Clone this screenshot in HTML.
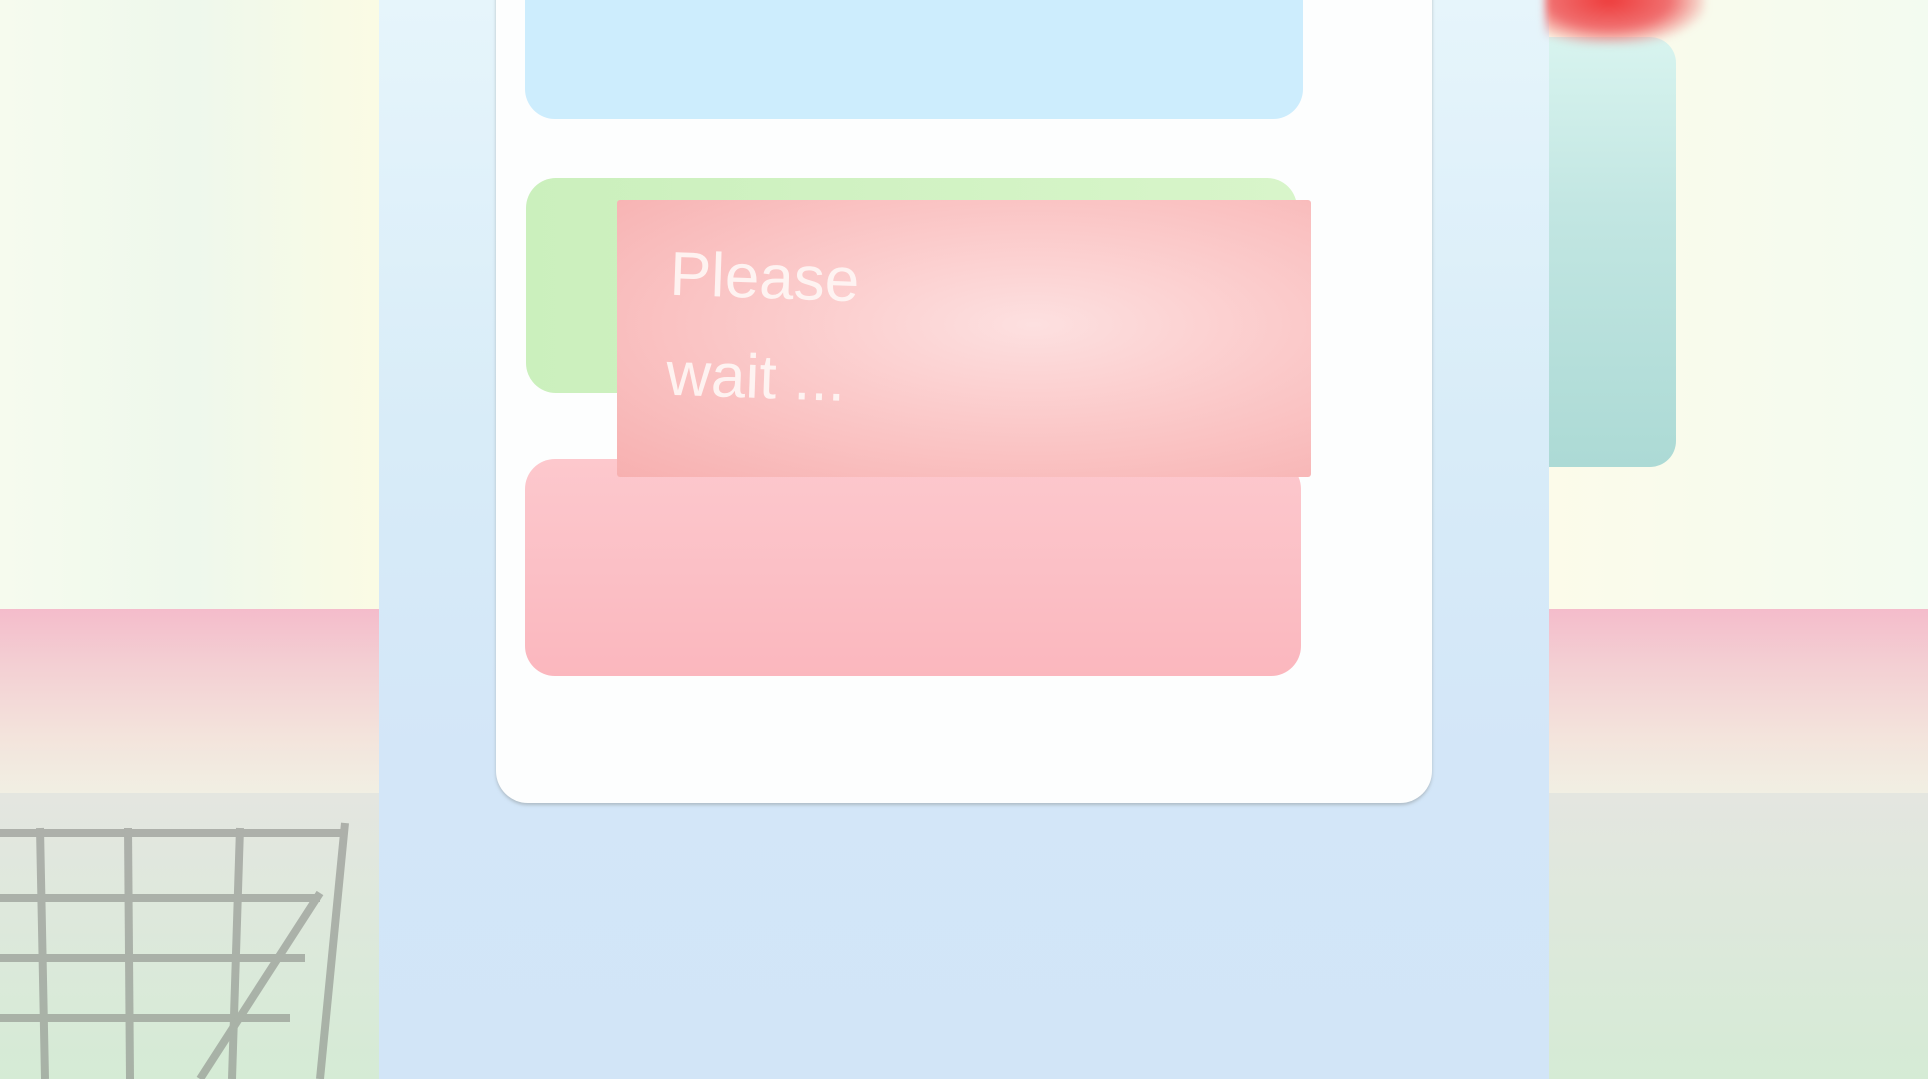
<!DOCTYPE html>
<html><head><meta charset="utf-8"><style>
html,body{margin:0;padding:0;width:1928px;height:1079px;overflow:hidden;position:relative;font-family:"Liberation Sans",sans-serif}
div{position:absolute;box-sizing:border-box}
</style></head><body>
<div style="left:0;top:0;width:1928px;height:609px;background:linear-gradient(90deg,#f6fbee 0%,#eef8ec 10%,#fbfbe4 20%,#fcfbea 80%,#f3fbf0 100%)"></div>
<div style="left:0;top:609px;width:1928px;height:184px;background:linear-gradient(180deg,#f4bccb 0%,#f3cfd3 30%,#f3e4dc 70%,#f1efe3 100%)"></div>
<div style="left:0;top:793px;width:1928px;height:286px;background:linear-gradient(180deg,#e4e6e0 0%,#dbe9da 60%,#d5ebd5 100%)"></div>
<svg style="position:absolute;left:0;top:793px" width="379" height="286">
<g stroke="#8a8d88" stroke-width="8" fill="none" opacity="0.6">
<line x1="0" y1="40" x2="345" y2="40"/><line x1="0" y1="105" x2="320" y2="105"/><line x1="0" y1="165" x2="305" y2="165"/><line x1="0" y1="225" x2="290" y2="225"/>
<line x1="40" y1="35" x2="45" y2="286"/><line x1="128" y1="35" x2="130" y2="286"/><line x1="240" y1="35" x2="232" y2="286"/><line x1="345" y1="30" x2="320" y2="286"/>
<line x1="320" y1="100" x2="200" y2="286"/>
</g></svg>
<div style="left:379px;top:0;width:1170px;height:1079px;background:linear-gradient(180deg,#e6f5fb 0%,#d8ecf8 40%,#d3e6f8 70%,#d2e5f7 100%)"></div>
<div style="left:496px;top:-40px;width:936px;height:843px;background:#fdfefe;border-radius:0 0 32px 32px;box-shadow:0 2px 3px rgba(150,160,165,.6)"></div>
<div style="left:525px;top:-40px;width:778px;height:159px;background:#cdedfd;border-radius:0 0 30px 30px"></div>
<div style="left:526px;top:178px;width:771px;height:215px;background:linear-gradient(90deg,#cbf0bd,#d8f5ca);border-radius:30px"></div>
<div style="left:525px;top:459px;width:776px;height:217px;background:linear-gradient(180deg,#fdc8cd 0%,#fbc0c6 50%,#fbb7be 100%);border-radius:30px"></div>
<div style="left:617px;top:200px;width:694px;height:277px;background:radial-gradient(ellipse at 60% 45%,#fde0e0 0%,#fbcaca 45%,#f7b0b0 100%);border-radius:3px"></div>
<div style="left:668px;top:228px;color:#fff8f6;font-family:'Liberation Sans',sans-serif;font-size:62px;line-height:100px;opacity:.9;transform:rotate(2deg)">Please<br>wait ...</div>
<div style="left:1549px;top:37px;width:127px;height:430px;background:linear-gradient(180deg,#d8f4ef 0%,#c2e6e2 40%,#acdad5 100%);border-radius:0 26px 26px 0"></div>
<div style="left:1545px;top:-30px;width:160px;height:75px;background:radial-gradient(ellipse at 40% 40%,#ee3b3b 0%,#f07070 45%,rgba(250,200,200,0) 75%);filter:blur(4px)"></div>
</body></html>
